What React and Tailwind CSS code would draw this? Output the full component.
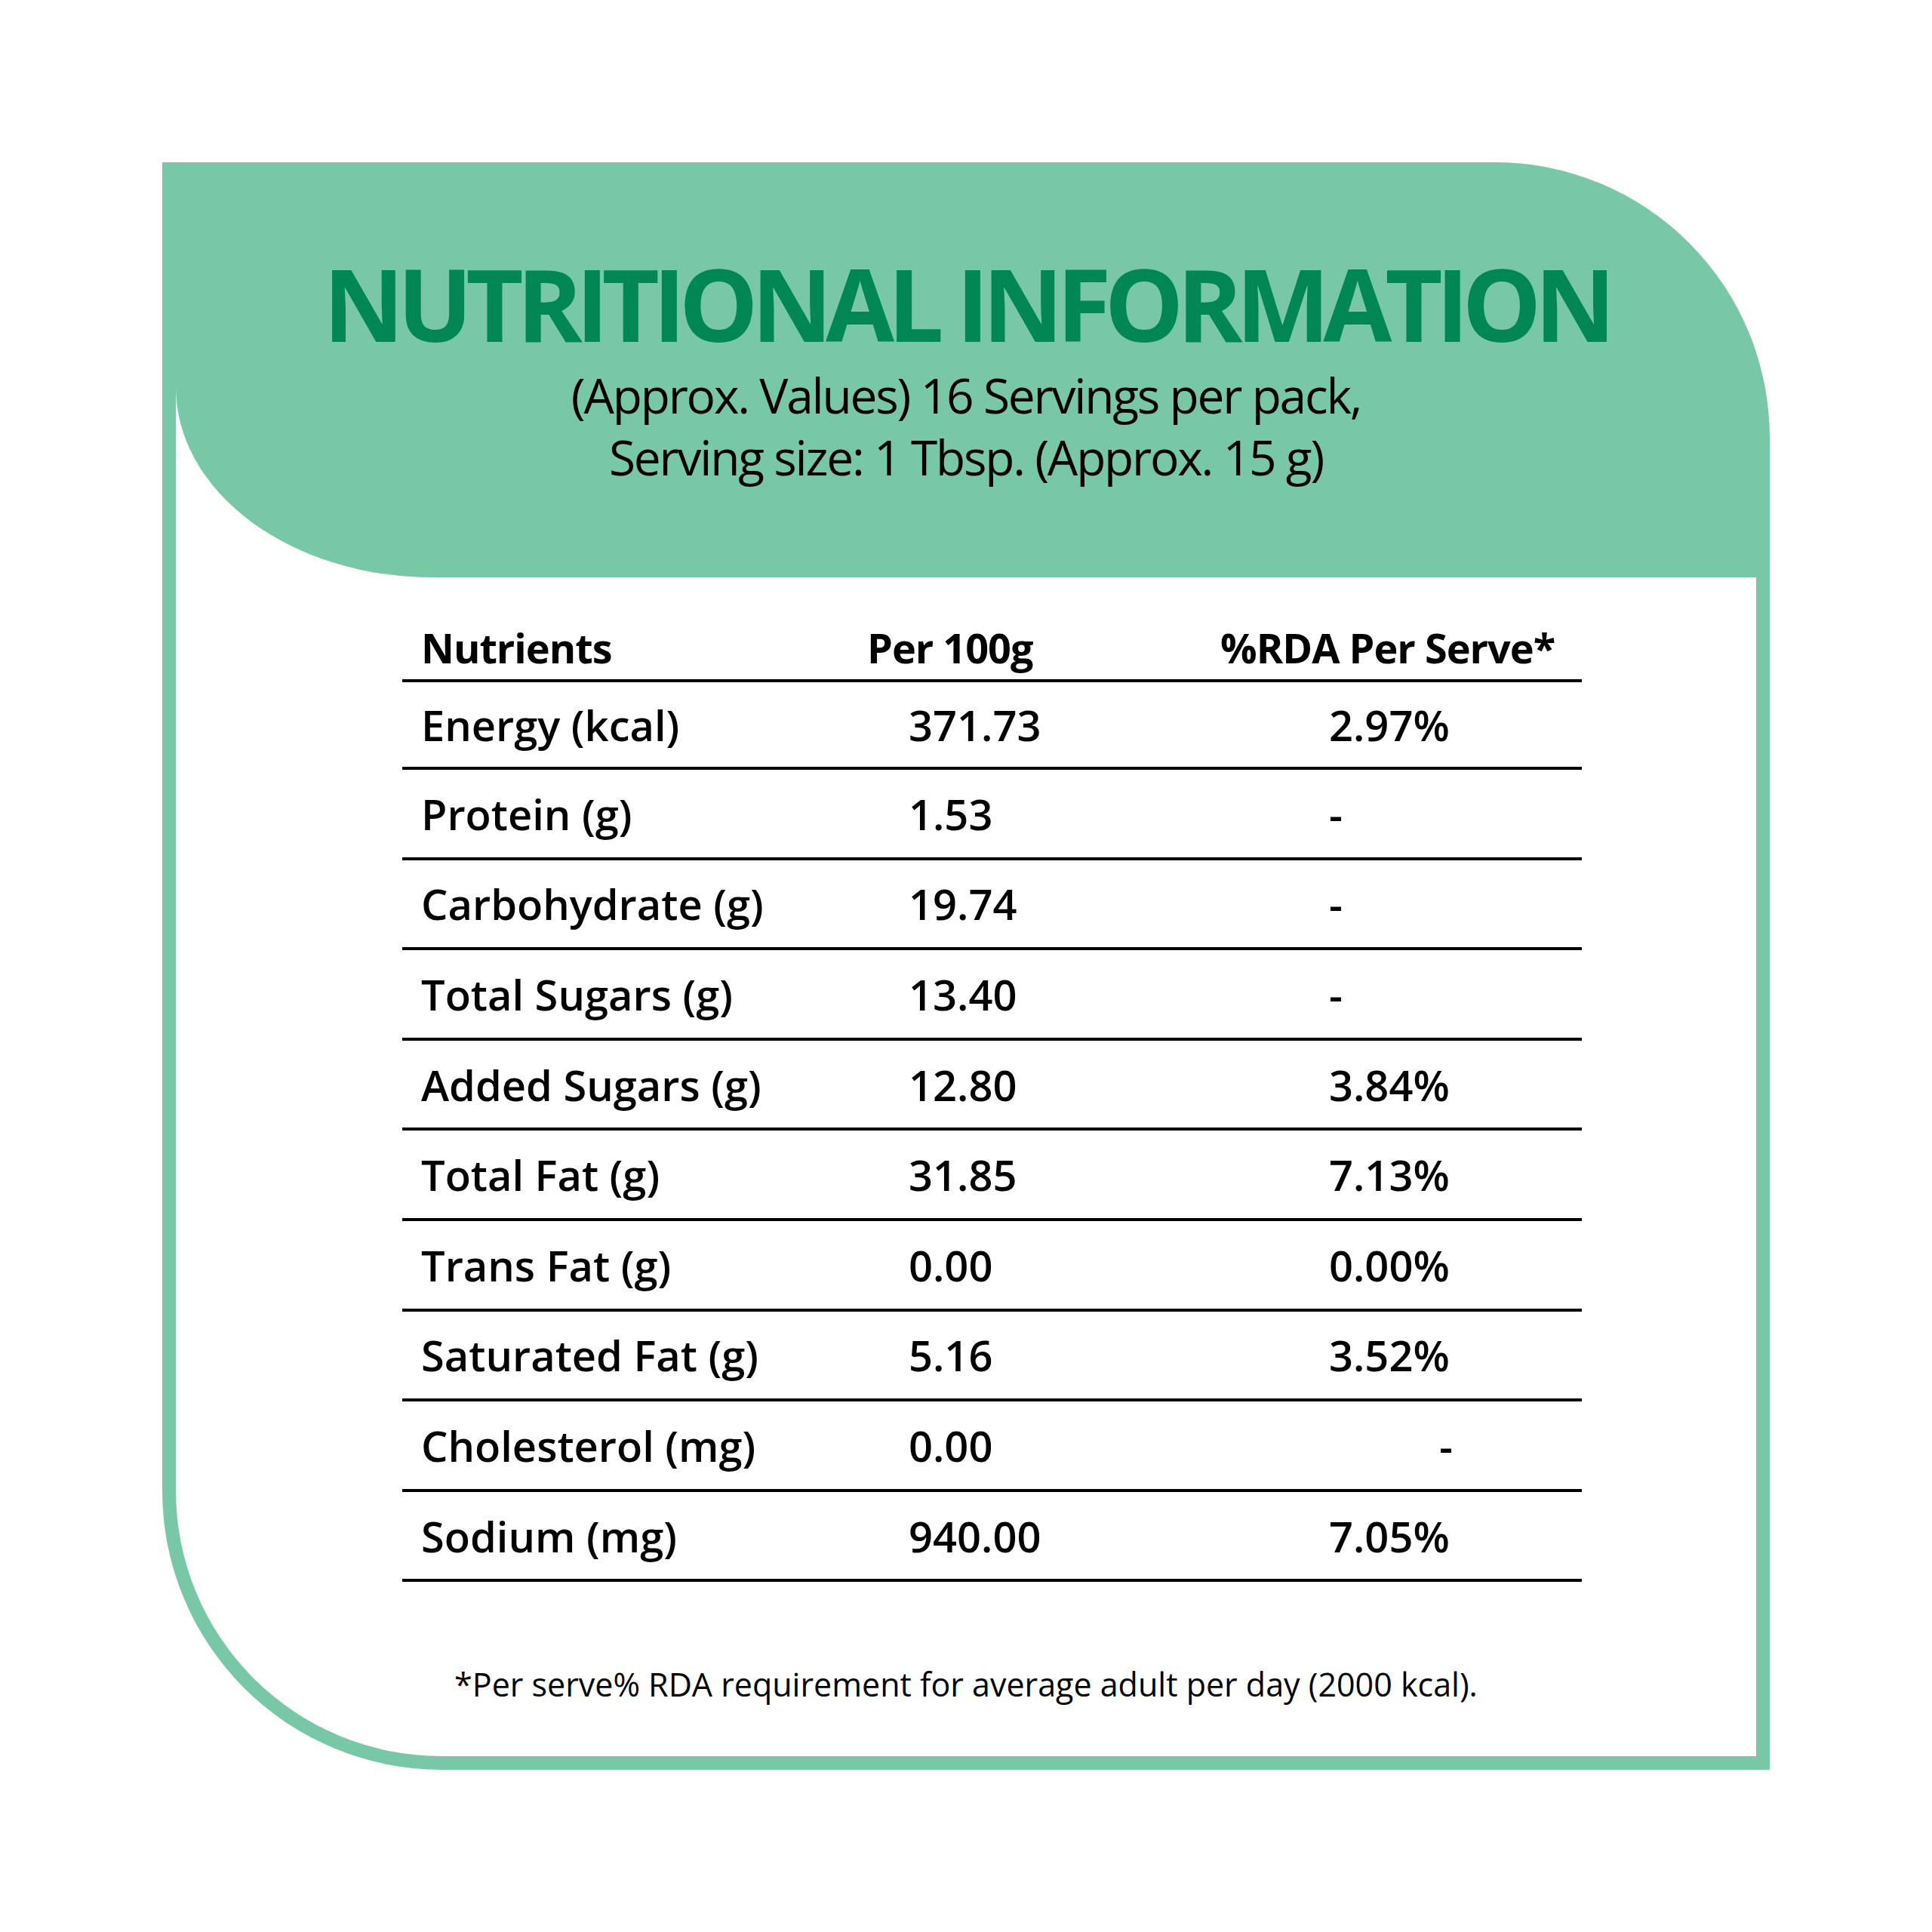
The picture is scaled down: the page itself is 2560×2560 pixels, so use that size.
import React from 'react';

const rows = [
  { n: 'Energy (kcal)', v: '371.73', r: '2.97%' },
  { n: 'Protein (g)', v: '1.53', r: '-' },
  { n: 'Carbohydrate (g)', v: '19.74', r: '-' },
  { n: 'Total Sugars (g)', v: '13.40', r: '-' },
  { n: 'Added Sugars (g)', v: '12.80', r: '3.84%' },
  { n: 'Total Fat (g)', v: '31.85', r: '7.13%' },
  { n: 'Trans Fat (g)', v: '0.00', r: '0.00%' },
  { n: 'Saturated Fat (g)', v: '5.16', r: '3.52%' },
  { n: 'Cholesterol (mg)', v: '0.00', r: '-', shift: true },
  { n: 'Sodium (mg)', v: '940.00', r: '7.05%' },
];

export default function App() {
  return (
    <div className="w-[2560px] h-[2560px] bg-white pt-[215px] font-['Open_Sans','Noto_Sans',sans-serif] text-black">
      <div className="mx-auto w-[2130px] h-[2130px] flex flex-col overflow-hidden bg-[#78c8a8] px-[18px] pb-[18px] rounded-tr-[365px] rounded-bl-[370px]">
        <div className="flex-1 flex flex-col bg-white rounded-bl-[352px] overflow-hidden">
          <header className="h-[550px] shrink-0 bg-[#78c8a8] rounded-bl-[340px_252px] flex flex-col items-center pt-[121px]">
            <h1 className="text-[132px] leading-[132px] font-bold text-[#008755] tracking-[-9px]">
              NUTRITIONAL INFORMATION
            </h1>
            <p className="mt-[15px] text-[64px] leading-[82px] tracking-[-2.2px] text-center">
              (Approx. Values) 16 Servings per pack,
              <br />
              Serving size: 1 Tbsp. (Approx. 15 g)
            </p>
          </header>

          <div className="flex-1 flex flex-col pt-[55px]">
            <div className="ml-[300px] w-[1563px] flex flex-col">
              <div className="h-[84px] flex items-start border-b-4 border-black text-[54px] leading-[76px] font-bold tracking-[-1px]">
                <div className="w-[616px] pl-[25px]">Nutrients</div>
                <div className="w-[468px]">Per 100g</div>
                <div className="flex-1">%RDA Per Serve*</div>
              </div>
              {rows.map((row, i) => (
                <div
                  key={row.n}
                  className={`${i === 0 ? 'h-[116px]' : 'h-[119.6px]'} flex items-center border-b-4 border-black text-[56px] leading-[76px] font-semibold`}
                >
                  <div className="w-[616px] pl-[25px]">{row.n}</div>
                  <div className="w-[468px] pl-[55px]">{row.v}</div>
                  <div className={`flex-1 ${row.shift ? 'pl-[290px]' : 'pl-[144px]'}`}>{row.r}</div>
                </div>
              ))}
            </div>
            <p className="mt-[107px] text-[43px] leading-[58px] text-center">
              *Per serve% RDA requirement for average adult per day (2000 kcal).
            </p>
          </div>
        </div>
      </div>
    </div>
  );
}
